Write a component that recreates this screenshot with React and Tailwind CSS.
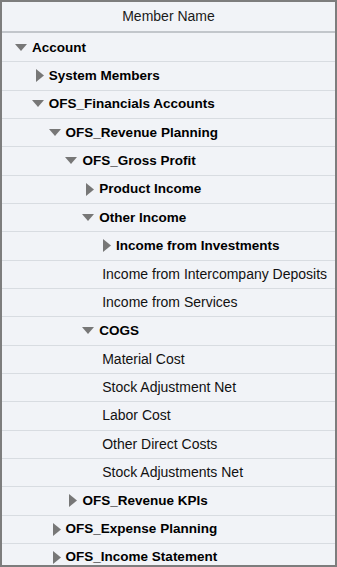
import React from 'react';

const rows = [
  { label: 'Account', level: 0, state: 'open' },
  { label: 'System Members', level: 1, state: 'closed' },
  { label: 'OFS_Financials Accounts', level: 1, state: 'open' },
  { label: 'OFS_Revenue Planning', level: 2, state: 'open' },
  { label: 'OFS_Gross Profit', level: 3, state: 'open' },
  { label: 'Product Income', level: 4, state: 'closed' },
  { label: 'Other Income', level: 4, state: 'open' },
  { label: 'Income from Investments', level: 5, state: 'closed' },
  { label: 'Income from Intercompany Deposits', level: 5 },
  { label: 'Income from Services', level: 5 },
  { label: 'COGS', level: 4, state: 'open' },
  { label: 'Material Cost', level: 5 },
  { label: 'Stock Adjustment Net', level: 5 },
  { label: 'Labor Cost', level: 5 },
  { label: 'Other Direct Costs', level: 5 },
  { label: 'Stock Adjustments Net', level: 5 },
  { label: 'OFS_Revenue KPIs', level: 3, state: 'closed' },
  { label: 'OFS_Expense Planning', level: 2, state: 'closed' },
  { label: 'OFS_Income Statement', level: 2, state: 'closed' },
];

function Toggle({ state }) {
  if (state === 'open') {
    return (
      <svg width="12" height="8" viewBox="0 0 12 8" className="mr-[5px]">
        <polygon points="0,0 12,0 6,7" fill="#777" />
      </svg>
    );
  }
  return (
    <svg width="8" height="13" viewBox="0 0 8 13" className="mr-[5px]">
      <polygon points="0,0 8,6.5 0,13" fill="#777" />
    </svg>
  );
}

function Row({ row }) {
  const isLeaf = !row.state;
  // text starts at 32 + 16.8 * level for parents
  const textX = isLeaf ? 32 + 16.8 * (row.level - 1) + 3 : 32 + 16.8 * row.level;
  return (
    <div className="h-[28.33px] shrink-0 border-b border-[#d8dce1] flex items-center relative">
      {isLeaf ? (
        <span style={{ paddingLeft: textX - 2 }} className="text-[14px] text-[#111] whitespace-nowrap">
          {row.label}
        </span>
      ) : (
        <div style={{ paddingLeft: textX - 2 }} className="flex items-center">
          <div className="absolute flex items-center justify-end" style={{ left: textX - 2 - 20, width: 20 }}>
            <Toggle state={row.state} />
          </div>
          <span className="text-[13.5px] font-bold text-[#000] whitespace-nowrap">{row.label}</span>
        </div>
      )}
    </div>
  );
}

export default function App() {
  return (
    <div
      className="w-[337px] h-[567px] bg-white overflow-hidden"
      style={{ fontFamily: '"Liberation Sans", Arial, sans-serif' }}
    >
      <div className="w-full h-full border-2 border-[#7d7d7d] bg-[#f1f3f7] flex flex-col overflow-hidden">
        <div className="h-[31px] shrink-0 border-b-2 border-[#c2c6cb] flex items-center justify-center text-[14px] text-[#1a1a1a]">
          Member Name
        </div>
        <div className="flex flex-col pt-[1px]">
          {rows.map((row, i) => (
            <Row key={i} row={row} />
          ))}
        </div>
      </div>
    </div>
  );
}
